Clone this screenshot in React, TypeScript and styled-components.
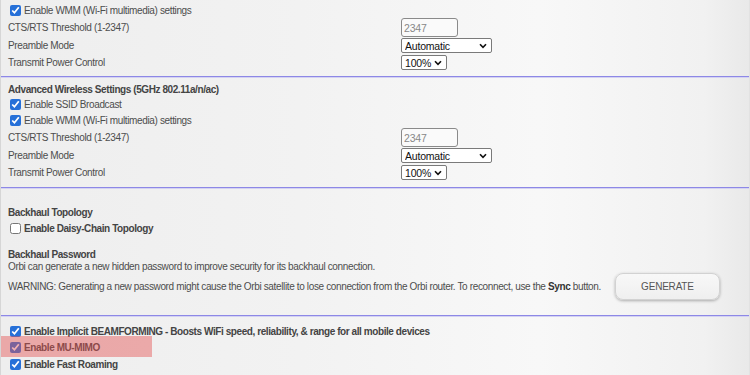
import React from 'react';
import styled, { createGlobalStyle } from 'styled-components';

const GlobalStyle = createGlobalStyle`
  html, body {
    margin: 0;
    padding: 0;
  }
  body {
    font-family: "Liberation Sans", Arial, sans-serif;
  }
`;

const chevron =
  "url(\"data:image/svg+xml,%3Csvg xmlns='http://www.w3.org/2000/svg' width='8' height='6' viewBox='0 0 8 6'%3E%3Cpath d='M1 1.2 4 4.3 7 1.2' fill='none' stroke='%23111' stroke-width='1.6'/%3E%3C/svg%3E\")";

const Page = styled.div`
  position: relative;
  width: 750px;
  height: 375px;
  overflow: hidden;
  box-sizing: border-box;
  border-left: 1px solid #d6d6d6;
  border-right: 1px solid #e2e2e2;
  background: linear-gradient(90deg, #eeeeee 0%, #f2f2f2 40%, #f8f8f8 72%, #f1f1f1 94%, #e9e9e9 100%);
  color: #4d4d4d;
  font-size: 10px;
  letter-spacing: -0.36px;
`;

const Section = styled.section<{ $top: number; $bottom: number; $line?: boolean }>`
  display: flex;
  flex-direction: column;
  padding-top: ${(p) => p.$top}px;
  padding-bottom: ${(p) => p.$bottom}px;
  border-bottom: ${(p) => (p.$line ? '1px solid #8d88e6' : 'none')};
  box-shadow: ${(p) => (p.$line ? '0 1px 0 #d4d2f2' : 'none')};
`;

const Row = styled.div<{ $h: number }>`
  display: grid;
  grid-template-columns: 393px auto;
  align-items: center;
  height: ${(p) => p.$h}px;
  padding-left: 7px;
`;

const Label = styled.span`
  white-space: nowrap;
`;

const CheckRow = styled.label<{ $h: number; $bold?: boolean }>`
  position: relative;
  display: flex;
  align-items: center;
  gap: 2px;
  height: ${(p) => p.$h}px;
  padding-left: 9px;
  font-weight: ${(p) => (p.$bold ? 700 : 400)};
  letter-spacing: ${(p) => (p.$bold ? '-0.42px' : '-0.36px')};
  color: ${(p) => (p.$bold ? '#444' : '#4d4d4d')};
  white-space: nowrap;
`;

const Box = styled.input`
  width: 11px;
  height: 11px;
  margin: 0 1px 0 0;
  accent-color: #2670d8;
`;

const Title = styled.div<{ $h: number; $gap?: number }>`
  display: flex;
  align-items: center;
  height: ${(p) => p.$h}px;
  margin-top: ${(p) => p.$gap ?? 0}px;
  padding-left: 7px;
  font-weight: 700;
  letter-spacing: -0.42px;
  color: #444;
  white-space: nowrap;
`;

const Text = styled.div<{ $h: number }>`
  display: flex;
  align-items: center;
  height: ${(p) => p.$h}px;
  padding-left: 7px;
  white-space: nowrap;
`;

const TextInput = styled.input`
  box-sizing: border-box;
  width: 57px;
  height: 19px;
  padding: 0 2px;
  border: 1px solid #8a8a8a;
  border-radius: 3px;
  background: #fafafa;
  color: #888;
  font-family: "Liberation Sans", Arial, sans-serif;
  font-size: 10.5px;
  letter-spacing: -0.2px;
`;

const Select = styled.select<{ $w: number }>`
  appearance: none;
  box-sizing: border-box;
  width: ${(p) => p.$w}px;
  height: 15px;
  padding: 0 0 0 3px;
  border: 1px solid #7a7a7a;
  border-radius: 2px;
  background: #fff ${chevron} no-repeat right 4px center;
  color: #111;
  font-family: "Liberation Sans", Arial, sans-serif;
  font-size: 10.5px;
  letter-spacing: -0.2px;
`;

const WarnRow = styled.div`
  display: flex;
  align-items: center;
  height: 28px;
  padding-left: 7px;
  white-space: nowrap;
  b {
    color: #333;
  }
`;

const GenerateButton = styled.button`
  box-sizing: border-box;
  width: 105px;
  height: 27px;
  margin-left: 14px;
  border: 1px solid #d2d2d2;
  border-radius: 8px;
  background: linear-gradient(#f8f8f8, #efefef);
  box-shadow: 0 1px 3px rgba(0, 0, 0, 0.3);
  color: #555;
  font-family: "Liberation Sans", Arial, sans-serif;
  font-size: 10px;
  letter-spacing: -0.2px;
`;

const Highlight = styled.span`
  position: absolute;
  left: 0;
  top: -3px;
  width: 151px;
  height: 21px;
  background: rgba(228, 82, 82, 0.45);
  pointer-events: none;
`;

function WirelessRows() {
  return (
    <>
      <CheckRow $h={16}>
        <Box type="checkbox" defaultChecked />
        Enable WMM (Wi-Fi multimedia) settings
      </CheckRow>
      <Row $h={19}>
        <Label>CTS/RTS Threshold (1-2347)</Label>
        <TextInput defaultValue="2347" />
      </Row>
      <Row $h={17}>
        <Label>Preamble Mode</Label>
        <Select $w={91} defaultValue="Automatic">
          <option>Automatic</option>
          <option>Long Preamble</option>
          <option>Short Preamble</option>
        </Select>
      </Row>
      <Row $h={17}>
        <Label>Transmit Power Control</Label>
        <Select $w={46} defaultValue="100%">
          <option>100%</option>
          <option>75%</option>
          <option>50%</option>
          <option>25%</option>
        </Select>
      </Row>
    </>
  );
}

export default function App() {
  return (
    <Page>
      <GlobalStyle />
      <Section $top={2} $bottom={5} $line>
        <WirelessRows />
      </Section>

      <Section $top={4} $bottom={6} $line>
        <Title $h={16}>Advanced Wireless Settings (5GHz 802.11a/n/ac)</Title>
        <CheckRow $h={15}>
          <Box type="checkbox" defaultChecked />
          Enable SSID Broadcast
        </CheckRow>
        <WirelessRows />
      </Section>

      <Section $top={16} $bottom={15} $line>
        <Title $h={16}>Backhaul Topology</Title>
        <CheckRow $h={16} $bold>
          <Box type="checkbox" />
          Enable Daisy-Chain Topology
        </CheckRow>
        <Title $h={12} $gap={12}>
          Backhaul Password
        </Title>
        <Text $h={12}>
          Orbi can generate a new hidden password to improve security for its backhaul connection.
        </Text>
        <WarnRow>
          WARNING: Generating a new password might cause the Orbi satellite to lose connection from the
          Orbi router. To reconnect, use the&nbsp;<b>Sync</b>&nbsp;button.
          <GenerateButton>GENERATE</GenerateButton>
        </WarnRow>
      </Section>

      <Section $top={7} $bottom={0}>
        <CheckRow $h={16} $bold>
          <Box type="checkbox" defaultChecked />
          Enable Implicit BEAMFORMING - Boosts WiFi speed, reliability, &amp; range for all mobile devices
        </CheckRow>
        <CheckRow $h={17} $bold>
          <Box type="checkbox" defaultChecked />
          Enable MU-MIMO
          <Highlight />
        </CheckRow>
        <CheckRow $h={16} $bold>
          <Box type="checkbox" defaultChecked />
          Enable Fast Roaming
        </CheckRow>
      </Section>
    </Page>
  );
}
